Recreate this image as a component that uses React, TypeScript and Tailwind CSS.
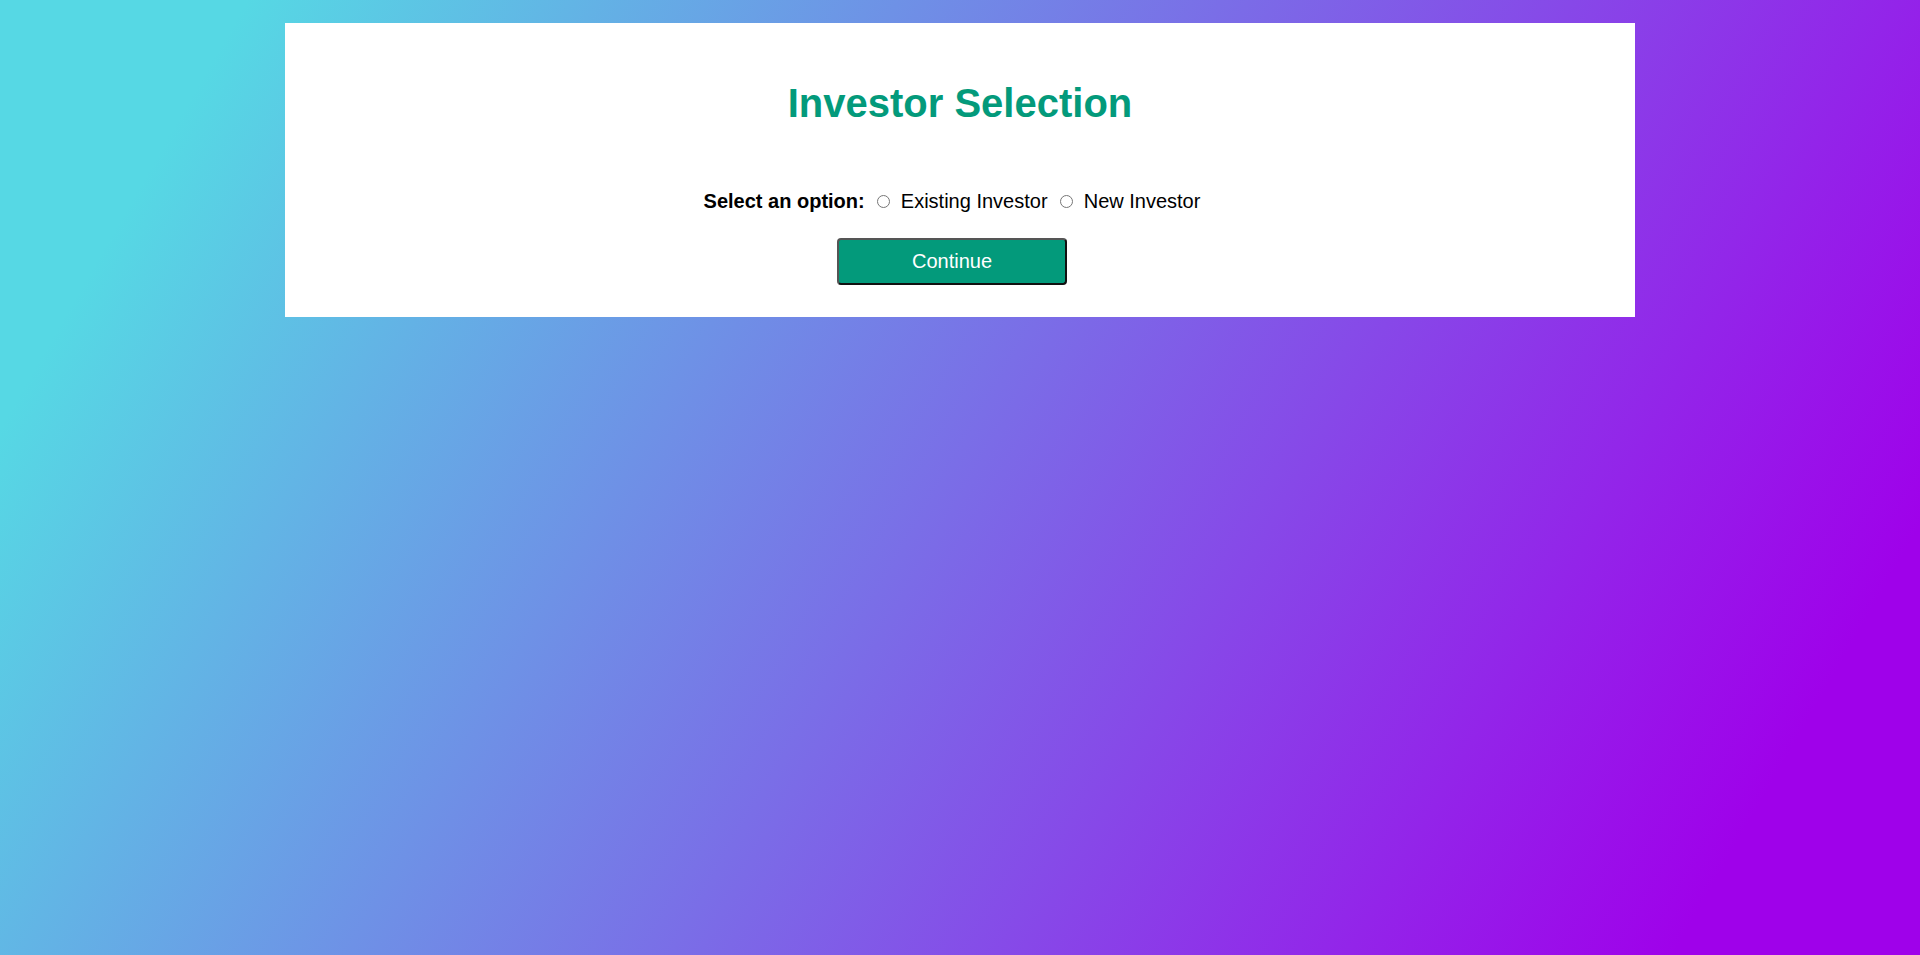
import React, { useState } from "react";

export default function App() {
  const [choice, setChoice] = useState<string>("");
  return (
    <div className="min-h-screen w-full pt-[23px] bg-[linear-gradient(120deg,#56d8e4_10%,#9f01ea_90%)] font-['Liberation_Sans',Arial,sans-serif]">
      <div className="mx-auto w-[1350px] bg-white pt-[57px] pb-[32px] text-center">
        <h1 className="text-[40px] leading-[46px] font-bold text-[#039a7b]">Investor Selection</h1>
        <div className="pr-[16px] mt-[64px]">
          <div className="text-[20px] leading-[23px] text-black">
            <label className="font-bold">Select an option:</label>{" "}
            <input
              type="radio"
              name="investor"
              id="existing"
              checked={choice === "existing"}
              onChange={() => setChoice("existing")}
              className="ml-[7px] mr-[5px] mt-[3px] w-[13px] h-[13px]"
            />{" "}
            <label htmlFor="existing">Existing Investor</label>{" "}
            <input
              type="radio"
              name="investor"
              id="new"
              checked={choice === "new"}
              onChange={() => setChoice("new")}
              className="ml-[7px] mr-[5px] mt-[3px] w-[13px] h-[13px]"
            />{" "}
            <label htmlFor="new">New Investor</label>
          </div>
          <button
            type="button"
            className="mt-[25px] w-[230px] h-[47px] bg-[#039a7b] text-white text-[20px] leading-[23px] rounded-[4px] border-2 border-t-[#555] border-l-[#555] border-r-[#111] border-b-[#111]"
          >
            Continue
          </button>
        </div>
      </div>
    </div>
  );
}
